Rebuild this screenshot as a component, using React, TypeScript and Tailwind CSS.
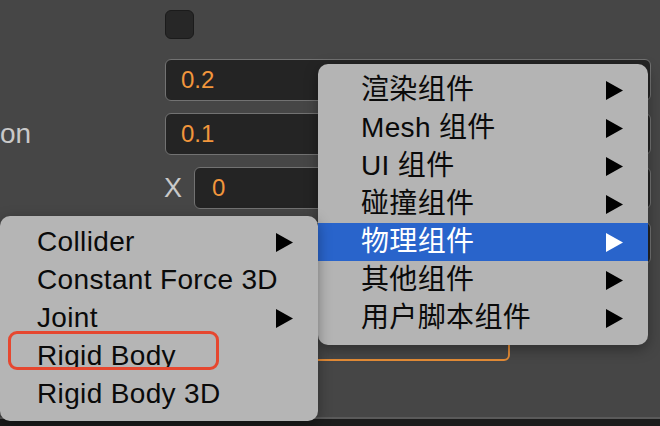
import type { ReactNode } from "react";

const ui = { fontFamily: '"Liberation Sans", "Noto Sans CJK SC", Arial, sans-serif' };

const Arrow = ({ light }: { light?: boolean }) => (
  <svg width="17" height="19" viewBox="0 0 17 19">
    <polygon points="0,0 17,9.5 0,19" fill={light ? "#ffffff" : "#000000"} />
  </svg>
);

const MenuItem = ({
  label,
  sub,
  active,
  left,
}: {
  label: string;
  sub?: boolean;
  active?: boolean;
  left: string;
}) => (
  <div
    className={`flex h-[38px] items-center justify-between pr-[25px] ${left} ${
      active ? "bg-[#2964cb] text-white" : "text-[#0a0a0a]"
    }`}
  >
    <span className="text-[28px] leading-none tracking-[0.35px]">{label}</span>
    {sub && <Arrow light={active} />}
  </div>
);

const Field = ({ value, className }: { value: string; className: string }) => (
  <div
    className={`flex h-[42px] items-center rounded-[6px] border-[1.5px] border-[#727272] bg-[#242424] text-[24px] text-[#f2963c] ${className}`}
  >
    {value}
  </div>
);

const Row = ({ children, className }: { children: ReactNode; className?: string }) => (
  <div className={`flex items-center ${className ?? ""}`}>{children}</div>
);

export default function App() {
  const mainItems = [
    { label: "渲染组件" },
    { label: "Mesh 组件" },
    { label: "UI 组件" },
    { label: "碰撞组件" },
    { label: "物理组件", active: true },
    { label: "其他组件" },
    { label: "用户脚本组件" },
  ];

  const physicsItems = [
    { label: "Collider", sub: true },
    { label: "Constant Force 3D", sub: false },
    { label: "Joint", sub: true },
    { label: "Rigid Body", sub: false },
    { label: "Rigid Body 3D", sub: false },
  ];

  return (
    <div className="relative h-[426px] w-[660px] overflow-hidden bg-[#1c1c1c]" style={ui}>
      {/* inspector panel */}
      <div className="flex h-[419px] flex-col border-b-[2px] border-[#5a5a5a] bg-[#464646] pt-[10px]">
        <Row className="pl-[165px]">
          <div className="h-[29px] w-[29px] rounded-[6px] border border-[#1b1b1b] bg-[#272727]" />
        </Row>

        <Row className="mt-[20px] pl-[165px]">
          <Field value="0.2" className="w-[486px] pl-[15px]" />
        </Row>

        <Row className="mt-[12px]">
          <span className="w-[165px] text-[28px] text-[#c9c9c9]">on</span>
          <Field value="0.1" className="w-[486px] pl-[15px]" />
        </Row>

        <Row className="mt-[12px]">
          <span className="w-[194px] pl-[164px] text-[27px] text-[#c9c9c9]">X</span>
          <Field value="0" className="w-[457px] pl-[17px]" />
        </Row>

        <Row className="mt-[13px]">
          <span className="w-[194px] pl-[164px] text-[27px] text-[#c9c9c9]">Y</span>
          <Field value="0" className="w-[457px] pl-[17px]" />
        </Row>

        <Row className="mt-[12px] pl-[20px]">
          <div className="h-[85px] w-[490px] rounded-[6px] border-2 border-[#e38b36]" />
        </Row>
      </div>

      {/* component menu */}
      <div className="absolute left-[318px] top-[64px] w-[330px] rounded-[10px] bg-[#b4b4b4] pb-[8px] pt-[7px] shadow-[0_4px_14px_rgba(0,0,0,0.35)]">
        {mainItems.map((it) => (
          <MenuItem key={it.label} label={it.label} sub active={it.active} left="pl-[43px]" />
        ))}
      </div>

      {/* physics submenu */}
      <div className="absolute left-0 top-[216px] w-[318px] rounded-[10px] bg-[#b5b5b5] pb-[8px] pt-[7px] shadow-[0_4px_14px_rgba(0,0,0,0.35)]">
        {physicsItems.map((it) => (
          <MenuItem key={it.label} label={it.label} sub={it.sub} left="pl-[37px]" />
        ))}
      </div>

      {/* annotation */}
      <div className="absolute left-[8px] top-[331px] h-[39px] w-[211px] rounded-[9px] border-[3px] border-[#e6472f]" />
      <div className="absolute left-[20px] top-[370px] h-[5px] w-[190px] bg-[#b5b5b5]" />
    </div>
  );
}
